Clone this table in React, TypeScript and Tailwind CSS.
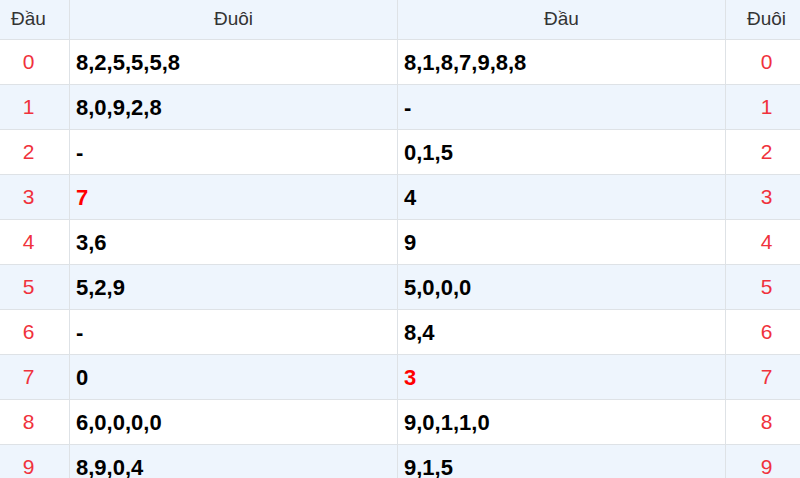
import React from "react";

type Cell = { v: string; red?: boolean };
const rows: { d: string; a: Cell; b: Cell }[] = [
  { d: "0", a: { v: "8,2,5,5,5,8" }, b: { v: "8,1,8,7,9,8,8" } },
  { d: "1", a: { v: "8,0,9,2,8" }, b: { v: "-" } },
  { d: "2", a: { v: "-" }, b: { v: "0,1,5" } },
  { d: "3", a: { v: "7", red: true }, b: { v: "4" } },
  { d: "4", a: { v: "3,6" }, b: { v: "9" } },
  { d: "5", a: { v: "5,2,9" }, b: { v: "5,0,0,0" } },
  { d: "6", a: { v: "-" }, b: { v: "8,4" } },
  { d: "7", a: { v: "0" }, b: { v: "3", red: true } },
  { d: "8", a: { v: "6,0,0,0,0" }, b: { v: "9,0,1,1,0" } },
  { d: "9", a: { v: "8,9,0,4" }, b: { v: "9,1,5" } },
];

export default function App() {
  return (
    <div
      className="w-[800px] h-[478px] overflow-hidden bg-white"
      style={{ fontFamily: '"Liberation Sans", Arial, sans-serif' }}
    >
      <div className="grid grid-cols-[70px_328px_328px_74px] h-[40px] bg-[#eef5fd] border-b border-[#dee2e6] text-[19px] text-[#333]">
        <div className="flex items-center justify-center pr-[12px] border-r border-[#dee2e6]">Đầu</div>
        <div className="flex items-center justify-center border-r border-[#dee2e6]">Đuôi</div>
        <div className="flex items-center justify-center border-r border-[#dee2e6]">Đầu</div>
        <div className="flex items-center justify-center pl-[7px]">Đuôi</div>
      </div>
      {rows.map((r, i) => (
        <div
          key={r.d}
          className={
            "grid grid-cols-[70px_328px_328px_74px] h-[45px] border-b border-[#dee2e6] " +
            (i % 2 === 1 ? "bg-[#eef5fd]" : "bg-white")
          }
        >
          <div className="flex items-center justify-center pr-[12px] border-r border-[#dee2e6] text-[21px] text-[#f0323c]">
            {r.d}
          </div>
          <div
            className={
              "flex items-center pl-[6px] border-r border-[#dee2e6] text-[22px] font-bold " +
              (r.a.red ? "text-[#f00]" : "text-black")
            }
          >
            {r.a.v}
          </div>
          <div
            className={
              "flex items-center pl-[6px] border-r border-[#dee2e6] text-[22px] font-bold " +
              (r.b.red ? "text-[#f00]" : "text-black")
            }
          >
            {r.b.v}
          </div>
          <div className="flex items-center justify-center pl-[7px] text-[21px] text-[#f0323c]">{r.d}</div>
        </div>
      ))}
    </div>
  );
}
